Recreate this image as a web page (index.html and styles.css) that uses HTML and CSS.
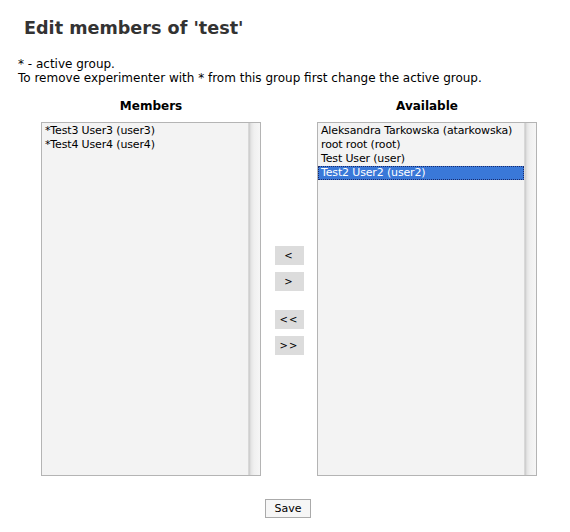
FILE: index.html
```html
<!DOCTYPE html>
<html>
<head>
<meta charset="utf-8">
<link rel="stylesheet" href="styles.css">
</head>
<body>
<div class="page">
  <h1 class="title">Edit members of 'test'</h1>
  <p class="note">* - active group.<br>To remove experimenter with * from this group first change the active group.</p>
  <div class="editor">
    <div class="col">
      <div class="col-head">Members</div>
      <div class="listbox">
        <div class="items">
          <div class="item">*Test3 User3 (user3)</div>
          <div class="item">*Test4 User4 (user4)</div>
        </div>
        <div class="scroll"></div>
      </div>
    </div>
    <div class="mid">
      <div class="btn-group">
        <button class="btn">&lt;</button>
        <button class="btn">&gt;</button>
      </div>
      <div class="btn-group">
        <button class="btn">&lt;&lt;</button>
        <button class="btn">&gt;&gt;</button>
      </div>
    </div>
    <div class="col">
      <div class="col-head">Available</div>
      <div class="listbox">
        <div class="items">
          <div class="item">Aleksandra Tarkowska (atarkowska)</div>
          <div class="item">root root (root)</div>
          <div class="item">Test User (user)</div>
          <div class="item selected">Test2 User2 (user2)</div>
        </div>
        <div class="scroll"></div>
      </div>
    </div>
  </div>
  <div class="actions"><button class="save">Save</button></div>
</div>
</body>
</html>
```
FILE: styles.css
```css
html, body { margin: 0; background: #fff; }
body { font-family: "DejaVu Sans", Verdana, sans-serif; font-size: 12px; color: #000; }
.page { padding: 0 0 0 18px; width: 552px; }
.title { margin: 0; padding: 17px 0 0 6px; font-size: 17.6px; font-weight: bold; color: #333; line-height: 22px; }
.note { margin: 18px 0 0 0; line-height: 14px; }
.editor { display: flex; margin-top: 14px; padding-left: 23px; }
.col { width: 220px; display: flex; flex-direction: column; align-items: center; }
.col-head { font-weight: bold; line-height: 14px; margin-bottom: 9px; }
.listbox { width: 220px; height: 354px; box-sizing: border-box; border: 1px solid #b4b4b4; background: #f3f3f3; display: flex; }
.items { flex: 1; padding: 1px 0 0 0; font-size: 11px; letter-spacing: -0.15px; }
.item { line-height: 14px; padding-left: 3px; white-space: nowrap; }
.item.selected { background: #3a78d8; color: #fff; outline: 1px dotted #1a2a6a; outline-offset: -1px; }
.scroll { width: 11px; background: linear-gradient(to right, #c8c8c8 0, #e4e4e4 2px, #f0f0f0 5px, #f6f6f6 100%); border-left: 1px solid #d8d8d8; }
.mid { width: 56px; display: flex; flex-direction: column; align-items: center; padding-top: 147px; gap: 19px; }
.btn-group { display: flex; flex-direction: column; gap: 7px; }
.btn { width: 29px; height: 19px; border: 0; background: #dcdcdc; font-family: "DejaVu Sans", sans-serif; font-size: 10px; color: #000; padding: 0; margin: 0; letter-spacing: 1px; }
.actions { display: flex; justify-content: center; padding: 23px 0 0 0; width: 540px; margin-left: 0; }
.save { width: 46px; height: 19px; border: 1px solid #aaa; background: #f6f6f6; font-family: "DejaVu Sans", sans-serif; font-size: 11px; padding: 0; }
```
